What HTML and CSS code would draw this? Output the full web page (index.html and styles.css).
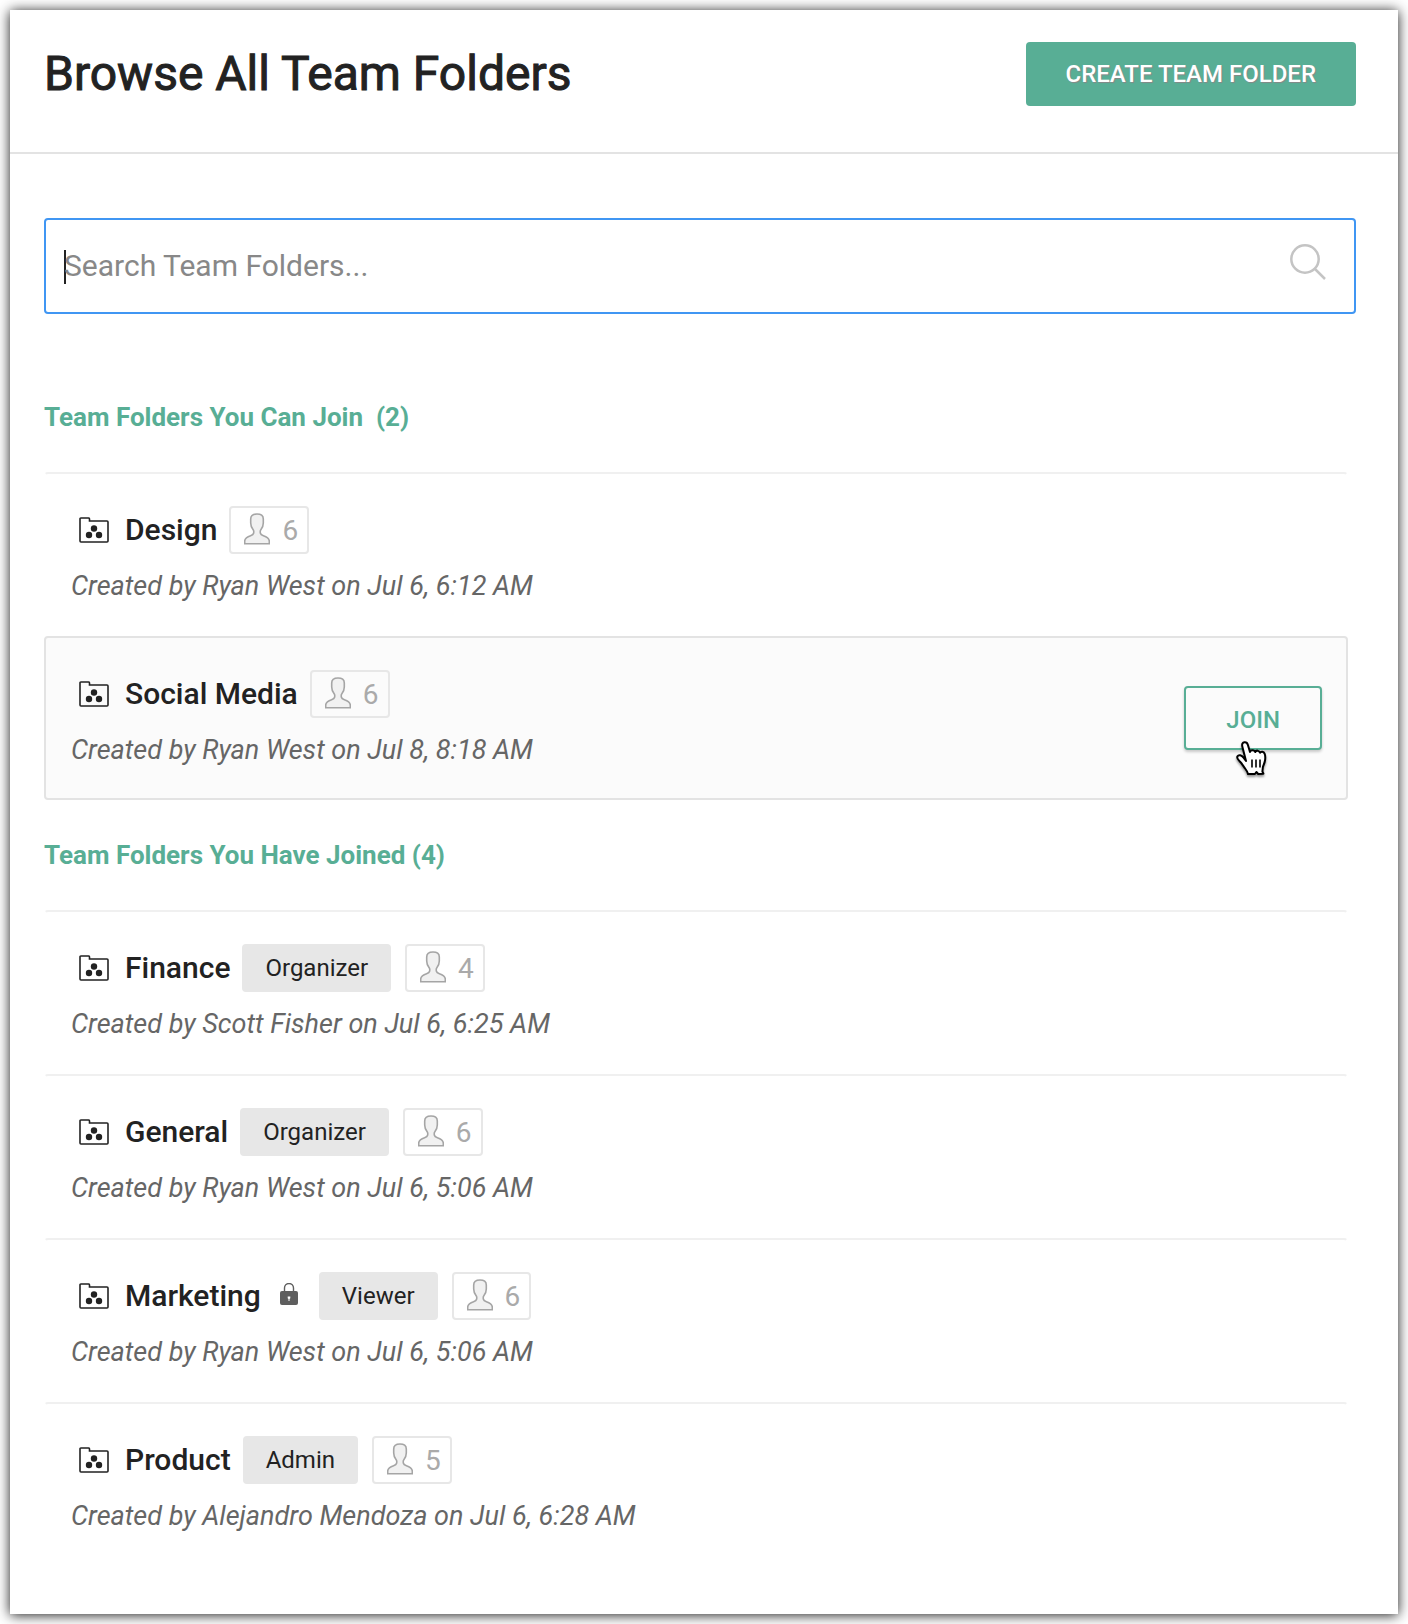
FILE: index.html
```html
<!DOCTYPE html>
<html lang="en">
<head>
  <meta charset="UTF-8">
  <meta name="viewport" content="width=device-width, initial-scale=1.0">
  <title>Browse All Team Folders</title>
  <link rel="stylesheet" href="styles.css">
</head>
<body>
  <!-- Shared icons -->
  <svg class="sprite" aria-hidden="true">
    <symbol id="icon-folder" viewBox="0 0 30 26">
      <path d="M1 2.2V24a1 1 0 0 0 1 1h26a1 1 0 0 0 1-1V5a1 1 0 0 0-1-1H10.500V1.800a1 1 0 0 0-1-.8H2a1 1 0 0 0-1 1.200z" fill="none" stroke="#222" stroke-width="1.600"/>
      <circle cx="15" cy="11.500" r="3.200" fill="#222"/>
      <circle cx="10" cy="18" r="3.200" fill="#222"/>
      <circle cx="20" cy="18" r="3.200" fill="#222"/>
    </symbol>
    <symbol id="icon-person" viewBox="0 0 26 32">
      <path d="M13 1c-4 0-6.300 1.500-6.300 5v4c0 2.500 1 4.800 2.300 6.500.8 1 .9 2.500.6 3.700-.3 1.300-1.400 1.900-3 2.500C3 24 .8 25.200.7 28v2.800h24.600V28c-.1-2.800-2.300-4-5.900-5.300-1.600-.6-2.700-1.200-3-2.500-.3-1.200-.2-2.700.6-3.700 1.300-1.700 2.300-4 2.300-6.500V6c0-3.500-2.300-5-6.300-5z" fill="#f1f1f1" stroke="#a5a5a5" stroke-width="1.600"/>
    </symbol>
  </svg>

  <main class="panel">
    <header class="panel-header">
      <h1>Browse All Team Folders</h1>
      <button type="button" class="btn-create">CREATE TEAM FOLDER</button>
    </header>

    <div class="panel-body">
      <div class="search">
        <input type="text" id="search" placeholder="Search Team Folders..." aria-label="Search Team Folders">
        <svg class="search-icon" viewBox="0 0 38 38" aria-hidden="true">
          <circle cx="16" cy="16" r="13.700"/>
          <path d="M26 26l10 10"/>
        </svg>
      </div>

      <section>
        <h2>Team Folders You Can Join &nbsp;(2)</h2>
        <ul class="folders">
          <li class="folder">
            <div class="info">
              <div class="title">
                <svg class="folder-icon"><use href="#icon-folder"/></svg>
                <h3>Design</h3>
                <span class="members"><svg><use href="#icon-person"/></svg>6</span>
              </div>
              <p>Created by Ryan West on Jul 6, 6:12 AM</p>
            </div>
          </li>
          <li class="folder active">
            <div class="info">
              <div class="title">
                <svg class="folder-icon"><use href="#icon-folder"/></svg>
                <h3>Social Media</h3>
                <span class="members"><svg><use href="#icon-person"/></svg>6</span>
              </div>
              <p>Created by Ryan West on Jul 8, 8:18 AM</p>
            </div>
            <div class="join">
              <button type="button" class="btn-join">JOIN</button>
              <svg class="pointer" viewBox="0 0 32 36" aria-hidden="true">
                <path d="M10 20L6.300 5.500C5.700 3 6.700 1.500 8.400 1.200c1.900-.3 3 .9 3.500 2.700L14 11c.3-2.400 4.500-2.600 5.200.1.700-2.200 4.200-1.900 4.900.7.900-1.700 3.700-1.200 4.500.8.700 1.700.8 4.400.4 6.900-.4 2.700-1.500 4.500-2.100 6.500l-.5 4.500 1 2.200-5.200.3-1.800-2-1.500 2H12c-.3-2.300-2-4.300-3.400-6.200-1.800-2.400-2.700-4.400-5-6.500C1.500 18.300.6 16.700 1.500 15.200c1.200-1.900 4.200-1 6 1.400z" fill="#fff" stroke="#000" stroke-width="2" stroke-linejoin="round"/>
                <path d="M16 18.500v8M20 18.500v8M24 18.500v8" fill="none" stroke="#000" stroke-width="1.600"/>
              </svg>
            </div>
          </li>
        </ul>
      </section>

      <section>
        <h2>Team Folders You Have Joined (4)</h2>
        <ul class="folders">
          <li class="folder">
            <div class="info">
              <div class="title">
                <svg class="folder-icon"><use href="#icon-folder"/></svg>
                <h3>Finance</h3>
                <span class="role">Organizer</span>
                <span class="members"><svg><use href="#icon-person"/></svg>4</span>
              </div>
              <p>Created by Scott Fisher on Jul 6, 6:25 AM</p>
            </div>
          </li>
          <li class="folder">
            <div class="info">
              <div class="title">
                <svg class="folder-icon"><use href="#icon-folder"/></svg>
                <h3>General</h3>
                <span class="role">Organizer</span>
                <span class="members"><svg><use href="#icon-person"/></svg>6</span>
              </div>
              <p>Created by Ryan West on Jul 6, 5:06 AM</p>
            </div>
          </li>
          <li class="folder">
            <div class="info">
              <div class="title">
                <svg class="folder-icon"><use href="#icon-folder"/></svg>
                <h3>Marketing</h3>
                <svg class="lock-icon" viewBox="0 0 18 22" aria-label="Private">
                  <path d="M4.500 9V5a4.500 4.500 0 0 1 9 0v4" fill="none" stroke="#5e5e5e" stroke-width="1.400"/>
                  <rect y="8" width="18" height="14" rx="2" fill="#5e5e5e"/>
                  <path d="M7.700 13.500h2.600v1.800l-.8.700v2h-1v-2l-.8-.7z" fill="#fff"/>
                </svg>
                <span class="role">Viewer</span>
                <span class="members"><svg><use href="#icon-person"/></svg>6</span>
              </div>
              <p>Created by Ryan West on Jul 6, 5:06 AM</p>
            </div>
          </li>
          <li class="folder">
            <div class="info">
              <div class="title">
                <svg class="folder-icon"><use href="#icon-folder"/></svg>
                <h3>Product</h3>
                <span class="role">Admin</span>
                <span class="members"><svg><use href="#icon-person"/></svg>5</span>
              </div>
              <p>Created by Alejandro Mendoza on Jul 6, 6:28 AM</p>
            </div>
          </li>
        </ul>
      </section>
    </div>
  </main>
</body>
</html>
```
FILE: styles.css
```css
* {
  box-sizing: border-box;
}
body {
  margin: 0;
  padding: 10px;
  font-family: Roboto, sans-serif;
  color: #222;
  background-color: #fff;
}
h1, h2, h3, p, ul {
  margin: 0;
  padding: 0;
}
.sprite {
  display: none;
}
.panel {
  background: #fff;
  box-shadow: 0 1px 12px rgba(0, 0, 0, 0.9);
}

/* Header */
.panel-header {
  display: flex;
  justify-content: space-between;
  align-items: center;
  padding: 32px 42px 46px 34px;
  border-bottom: 2px solid #e3e3e3;
}
.panel-header h1 {
  font-size: 48px;
  line-height: 64px;
  font-weight: 400;
  -webkit-text-stroke: 1px #222;
}
.btn-create {
  height: 64px;
  padding: 0 40px;
  font: 500 24px Roboto, sans-serif;
  color: #fff;
  background-color: #58ae95;
  border: none;
  border-radius: 4px;
  text-shadow: 1px 1px 1px #888;
  cursor: pointer;
}

.panel-body {
  padding: 64px 50px 48px 34px;
}

/* Search box */
.search {
  position: relative;
  margin: 0 -8px 48px 0;
}
.search input {
  display: block;
  width: 100%;
  height: 96px;
  padding: 0 80px 2px 18px;
  font: 30px Roboto, sans-serif;
  color: #222;
  background-color: #fff;
  border: 2px solid #4096f3;
  border-radius: 4px;
  outline: none;
}
.search input::placeholder {
  color: #888;
}
/* Text cursor while the box is empty */
.search input:placeholder-shown {
  background-image: linear-gradient(#222, #222);
  background-size: 2px 34px;
  background-position: 18px 30px;
  background-repeat: no-repeat;
}
.search-icon {
  position: absolute;
  top: 25px;
  right: 29px;
  width: 38px;
  height: 38px;
  fill: none;
  stroke: #c4c4c4;
  stroke-width: 2.500;
}

/* Folder lists */
h2 {
  font-size: 26px;
  line-height: 110px;
  font-weight: 700;
  color: #58ae95;
}
.folders {
  list-style: none;
}
.folder {
  display: flex;
  justify-content: space-between;
  align-items: center;
  padding: 32px 24px 32px 25px;
  border: 2px solid transparent;
  border-top-color: #f0f0f0;
  border-radius: 4px;
}
.folder.active {
  background-color: #fbfbfb;
  border-color: #e3e3e3;
}
.title {
  display: flex;
  align-items: center;
  gap: 12px;
  margin-bottom: 16px;
  padding-left: 8px;
}
.title h3 {
  font-size: 30px;
  line-height: 48px;
  font-weight: 500;
}
.folder-icon {
  width: 30px;
  height: 26px;
  margin-right: 4px;
}
.lock-icon {
  width: 18px;
  height: 22px;
  margin: 0 9px 4px 7px;
}
.role {
  padding: 0 23px;
  margin-right: 2px;
  font-size: 24px;
  line-height: 48px;
  background-color: #e7e7e7;
  border-radius: 4px;
}
.members {
  display: flex;
  align-items: center;
  gap: 12px;
  height: 48px;
  padding: 0 9px 0 13px;
  font-size: 28px;
  color: #aaa;
  border: 2px solid #e7e7e7;
  border-radius: 4px;
}
.members svg {
  width: 26px;
  height: 32px;
  margin-bottom: 2px;
}
.info p {
  font-size: 27px;
  line-height: 32px;
  font-style: italic;
  color: #666;
}

/* Join button */
.join {
  position: relative;
}
.btn-join {
  display: block;
  height: 64px;
  padding: 3px 40px 0;
  font: 500 24px Roboto, sans-serif;
  color: #58ae95;
  background-color: #fbfbfb;
  border: 2px solid #58ae95;
  border-radius: 4px;
  box-shadow: 0 2px 3px rgba(0, 0, 0, 0.2);
  cursor: pointer;
}
.pointer {
  position: absolute;
  top: 55px;
  left: 52px;
  width: 32px;
  height: 36px;
  filter: drop-shadow(0 2px 1px rgba(0, 0, 0, 0.4));
}
```
